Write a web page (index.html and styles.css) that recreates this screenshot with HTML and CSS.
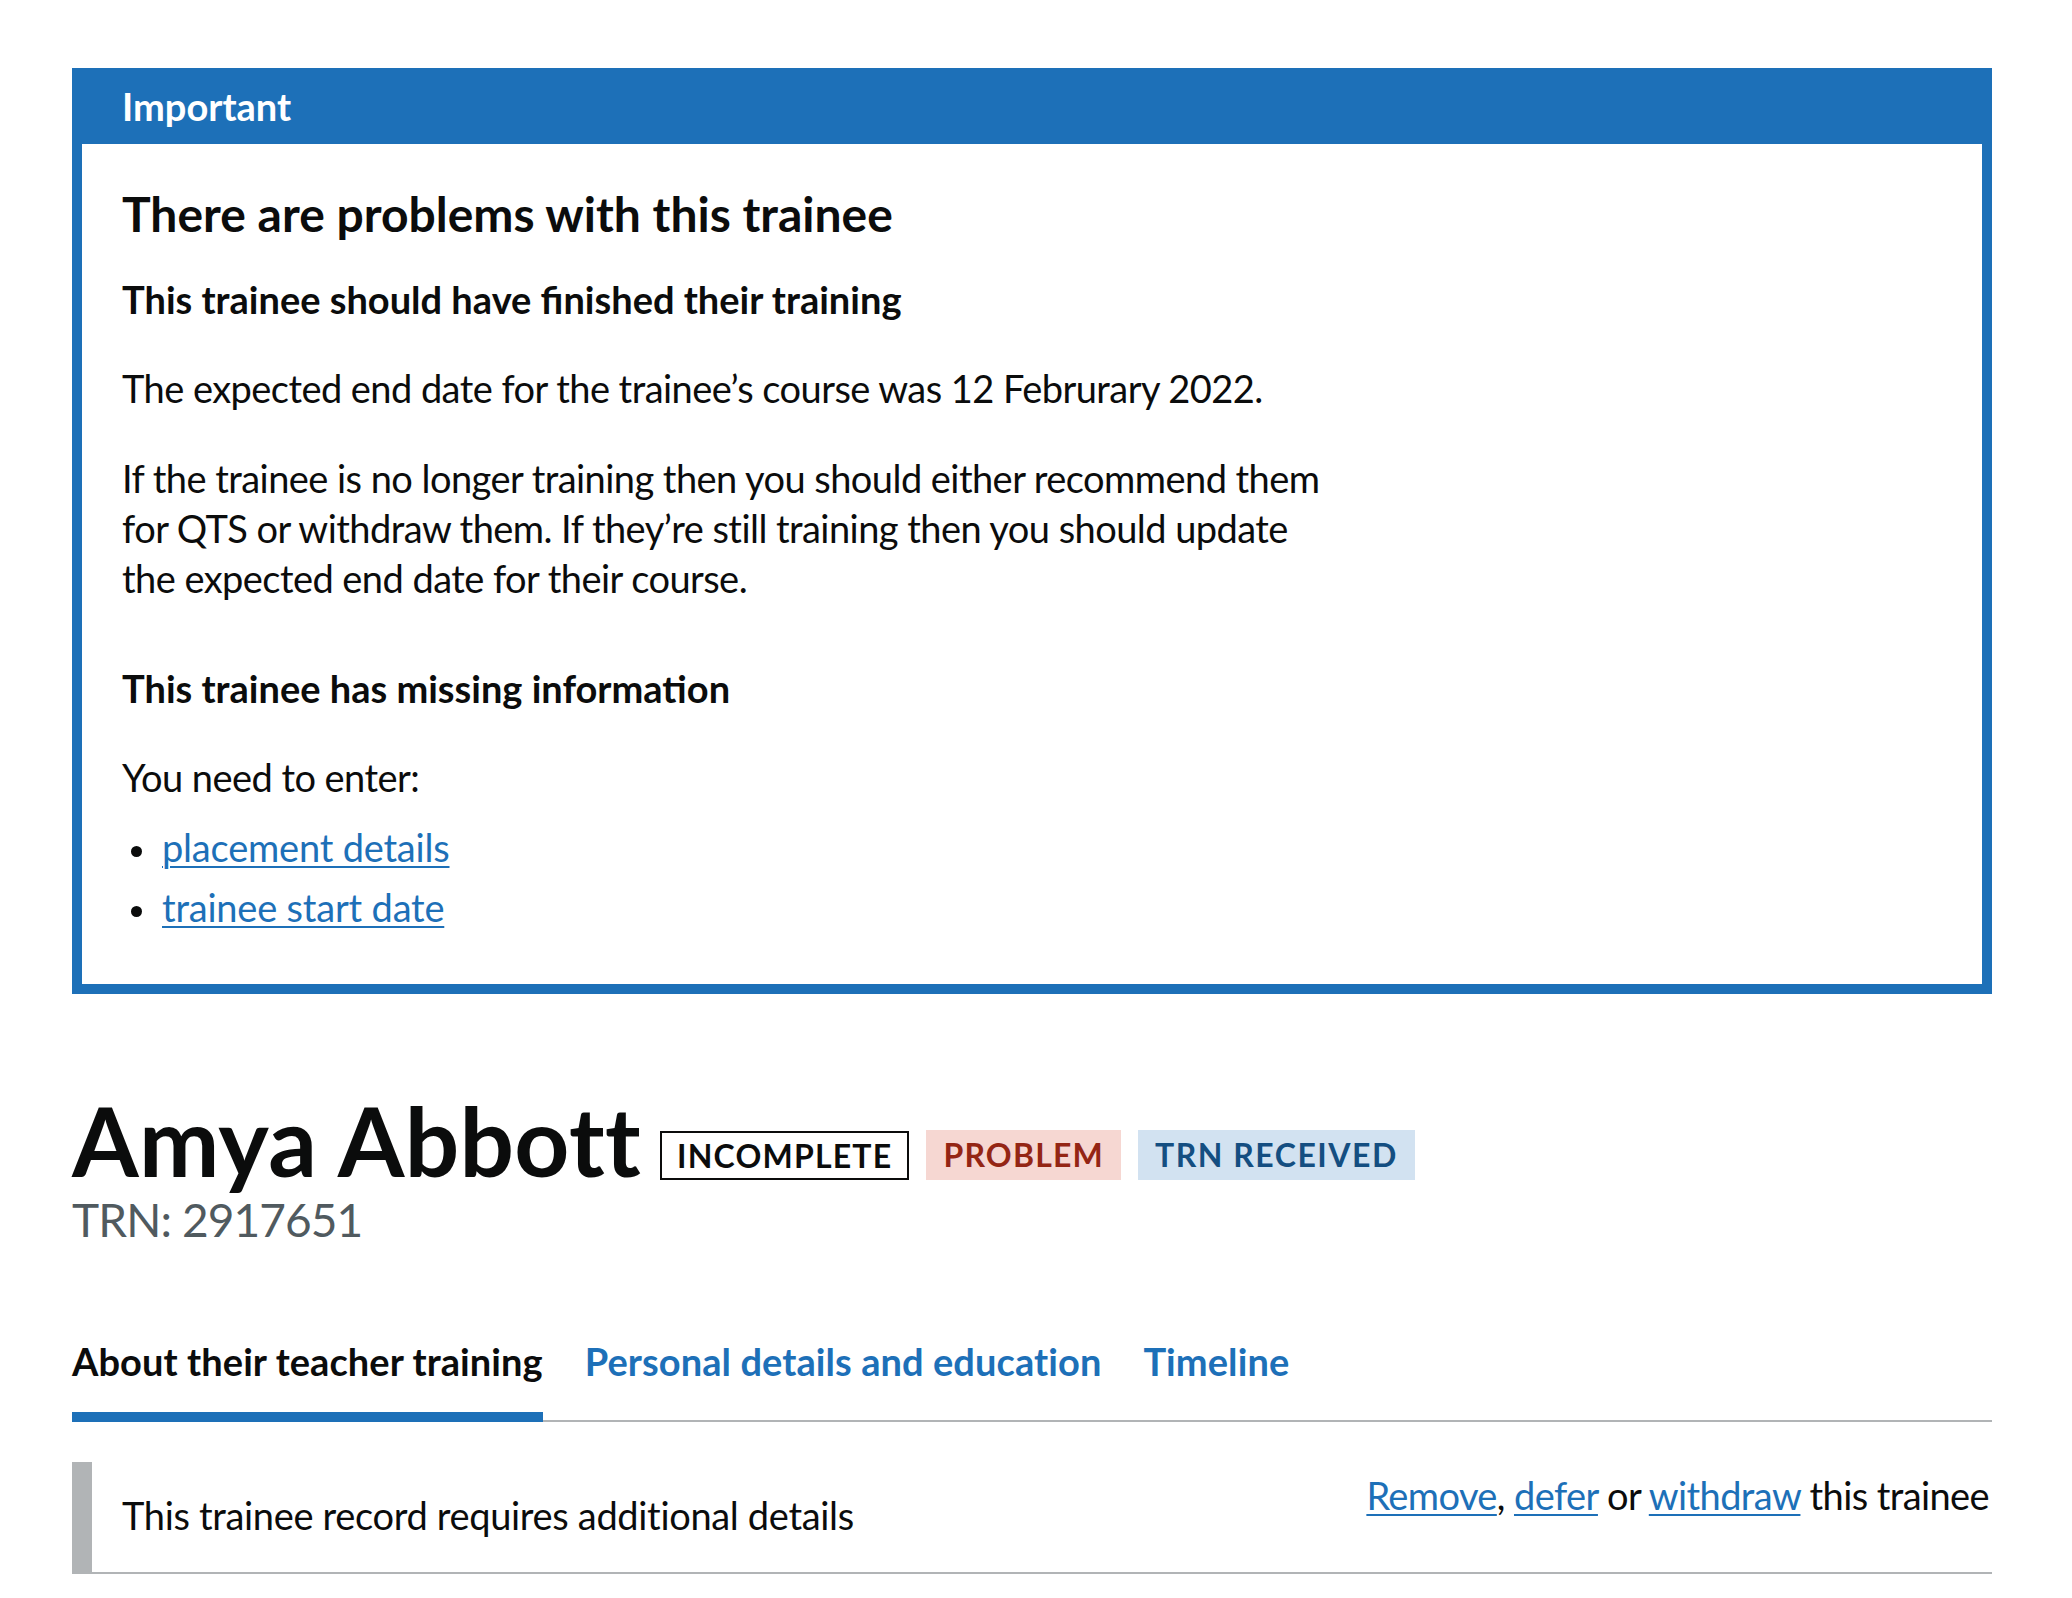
FILE: index.html
```html
<!DOCTYPE html>
<html lang="en">
<head>
<meta charset="utf-8">
<title>Amya Abbott</title>
<link rel="stylesheet" href="styles.css">
</head>
<body>
<main class="page">
  <div class="banner" role="region" aria-labelledby="banner-title">
    <div class="banner-header">
      <h2 class="banner-title" id="banner-title">Important</h2>
    </div>
    <div class="banner-content">
      <h3 class="banner-heading">There are problems with this trainee</h3>
      <h4 class="sub-heading">This trainee should have finished their training</h4>
      <p class="body">The expected end date for the trainee’s course was 12 Februrary 2022.</p>
      <p class="body">If the trainee is no longer training then you should either recommend them for QTS or withdraw them. If they’re still training then you should update the expected end date for their course.</p>
      <h4 class="sub-heading sub-heading-spaced">This trainee has missing information</h4>
      <p class="body lead-in">You need to enter:</p>
      <ul class="bullets">
        <li><a class="link" href="#">placement details</a></li>
        <li><a class="link" href="#">trainee start date</a></li>
      </ul>
    </div>
  </div>

  <h1 class="record-title">
    <span class="name">Amya Abbott</span>
    <strong class="tag tag-outline">Incomplete</strong>
    <strong class="tag tag-red">Problem</strong>
    <strong class="tag tag-blue">TRN received</strong>
  </h1>
  <p class="caption">TRN: 2917651</p>

  <nav class="tabs" aria-label="Trainee record">
    <ul class="tab-list">
      <li class="tab tab-active"><a class="tab-link" href="#">About their teacher training</a></li>
      <li class="tab"><a class="tab-link" href="#">Personal details and education</a></li>
      <li class="tab"><a class="tab-link" href="#">Timeline</a></li>
    </ul>
  </nav>

  <div class="status-row">
    <p class="inset">This trainee record requires additional details</p>
    <p class="actions"><a class="link" href="#">Remove</a>, <a class="link" href="#">defer</a> or <a class="link" href="#">withdraw</a> this trainee</p>
  </div>
</main>
</body>
</html>
```
FILE: styles.css
```css
html, body {
  margin: 0;
  padding: 0;
  background: #ffffff;
}

body {
  font-family: Lato, "Liberation Sans", Arial, sans-serif;
  color: #0b0c0c;
}

.page {
  width: 1920px;
  margin-left: 72px;
  padding-top: 68px;
  padding-bottom: 20px;
}

/* Notification banner */
.banner {
  border: 10px solid #1d70b8;
  background: #1d70b8;
}

.banner-header {
  padding: 3px 40px 11px;
  border-bottom: 2px solid transparent;
}

.banner-title {
  margin: 0;
  font-size: 38px;
  line-height: 50px;
  font-weight: 700;
  color: #ffffff;
}

.banner-content {
  background: #ffffff;
  padding: 40px 40px 42px;
}

.banner-content > * {
  max-width: 1210px;
}

.banner-heading {
  margin: 0 0 30px;
  font-size: 48px;
  line-height: 60px;
  font-weight: 700;
}

.sub-heading {
  margin: 0 0 39px;
  font-size: 38px;
  line-height: 50px;
  font-weight: 700;
}

.sub-heading-spaced {
  margin-top: 60px;
}

.body {
  margin: 0 0 40px;
  font-size: 38px;
  line-height: 50px;
  letter-spacing: -0.55px;
}

.lead-in {
  margin-bottom: 20px;
}

.bullets {
  list-style: none;
  margin: 0;
  padding: 0 0 0 40px;
}

.bullets li {
  position: relative;
  margin-bottom: 10px;
  font-size: 38px;
  line-height: 50px;
  letter-spacing: -0.2px;
}

.bullets li::before {
  content: "";
  position: absolute;
  left: -31px;
  top: 24px;
  width: 11px;
  height: 11px;
  border-radius: 50%;
  background: #0b0c0c;
}

.link {
  color: #1d70b8;
  text-decoration: underline;
  text-decoration-thickness: 2px;
  text-underline-offset: 4px;
}

/* Record title */
.record-title {
  display: flex;
  align-items: flex-start;
  margin: 96px 0 0;
  font-weight: 700;
}

.name {
  font-size: 96px;
  line-height: 100px;
  font-weight: 700;
  letter-spacing: 0.35px;
  margin-right: 19px;
}

.tag {
  margin-top: 40px;
  margin-right: 17px;
  padding: 0 17px;
  font-size: 32px;
  line-height: 50px;
  font-weight: 700;
  letter-spacing: 1.2px;
  text-transform: uppercase;
}

.tag-outline {
  margin-top: 41px;
  padding: 0 15px;
  line-height: 45px;
  border: 2px solid #0b0c0c;
  color: #0b0c0c;
  background: #ffffff;
}

.tag-red {
  background: #f6d7d2;
  color: #942514;
}

.tag-blue {
  background: #d2e2f1;
  color: #144e81;
  letter-spacing: 1.5px;
}

.caption {
  margin: 0;
  font-size: 46px;
  line-height: 60px;
  letter-spacing: -0.9px;
  color: #505a5f;
}

/* Tabs */
.tabs {
  margin-top: 86px;
}

.tab-list {
  display: flex;
  gap: 42px;
  list-style: none;
  margin: 0;
  padding: 0;
  border-bottom: 2px solid #b1b4b6;
}

.tab {
  margin-bottom: -2px;
  padding-bottom: 26px;
  border-bottom: 10px solid transparent;
}

.tab-active {
  border-bottom-color: #1d70b8;
}

.tab-link {
  font-size: 38px;
  line-height: 50px;
  font-weight: 700;
  letter-spacing: 0.08px;
  color: #1d70b8;
  text-decoration: none;
}

.tab-active .tab-link {
  color: #0b0c0c;
}

/* Status row */
.status-row {
  margin-top: 40px;
  display: flex;
  justify-content: space-between;
  align-items: flex-start;
  border-bottom: 2px solid #b1b4b6;
}

.inset {
  margin: 0;
  padding: 28px 30px 32px;
  border-left: 20px solid #b1b4b6;
  font-size: 38px;
  line-height: 50px;
  letter-spacing: -0.33px;
}

.actions {
  margin: 0;
  padding-top: 8px;
  padding-right: 3px;
  font-size: 38px;
  line-height: 50px;
  letter-spacing: -0.6px;
  text-align: right;
}
```
